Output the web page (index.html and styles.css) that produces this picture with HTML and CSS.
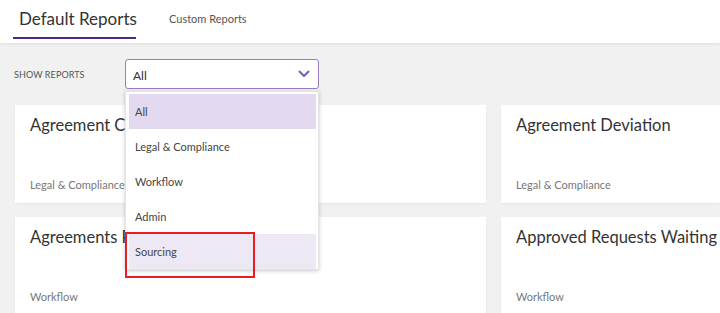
FILE: index.html
```html
<!DOCTYPE html>
<html>
<head>
<meta charset="utf-8">
<link rel="stylesheet" href="styles.css">
</head>
<body>
<header class="header">
  <nav class="tabs">
    <div class="tab tab-active">Default Reports</div>
    <div class="tab">Custom Reports</div>
  </nav>
</header>
<main class="main">
  <div class="filter">
    <span class="filter-label">SHOW REPORTS</span>
    <div class="select-wrap">
      <div class="select">
        <span>All</span>
        <svg class="chevron" width="12" height="8" viewBox="0 0 12 8"><path d="M1.5 1.5 L6 6 L10.5 1.5" fill="none" stroke="#7d5fb0" stroke-width="2" stroke-linecap="round" stroke-linejoin="round"/></svg>
      </div>
      <ul class="menu">
        <li class="item item-selected">All</li>
        <li class="item">Legal &amp; Compliance</li>
        <li class="item">Workflow</li>
        <li class="item">Admin</li>
        <li class="item item-hover">Sourcing</li>
      </ul>
      <div class="highlight-box"></div>
    </div>
  </div>
  <div class="cards">
    <div class="card">
      <div class="card-title card-title-under">Agreement Compliance</div>
      <div class="card-cat">Legal &amp; Compliance</div>
    </div>
    <div class="card">
      <div class="card-title">Agreement Deviation</div>
      <div class="card-cat">Legal &amp; Compliance</div>
    </div>
    <div class="card">
      <div class="card-title card-title-under">Agreements Pending</div>
      <div class="card-cat">Workflow</div>
    </div>
    <div class="card">
      <div class="card-title">Approved Requests Waiting</div>
      <div class="card-cat">Workflow</div>
    </div>
  </div>
</main>
</body>
</html>
```

FILE: styles.css
```css
* { box-sizing: border-box; }
html, body { margin: 0; padding: 0; }
body {
  width: 720px;
  height: 313px;
  overflow: hidden;
  font-family: "Lato", "Liberation Sans", sans-serif;
  background: #f1f1f1;
  color: #333;
}
.header {
  position: relative;
  z-index: 2;
  height: 43px;
  background: #fff;
  box-shadow: 0 1px 3px rgba(0,0,0,0.08);
}
.tabs {
  display: flex;
  align-items: flex-start;
  padding-left: 13px;
  height: 100%;
}
.tab {
  font-size: 11px;
  color: #555;
  padding: 12px 0 0 0;
  margin-left: 33px;
  white-space: nowrap;
}
.tab-active {
  margin-left: 0;
  font-size: 17px;
  color: #333;
  padding: 8px 0 0 6px;
  height: 39px;
  border-bottom: 2px solid #4b2a85;
  width: 123px;
}
.main {
  padding: 16px 0 0 15px;
}
.filter {
  display: flex;
  align-items: center;
  height: 30px;
  position: relative;
  z-index: 3;
}
.filter-label {
  font-size: 9px;
  color: #555;
  width: 111px;
  margin-left: -1px;
  letter-spacing: 0.1px;
}
.select-wrap {
  position: relative;
  width: 194px;
  height: 30px;
}
.select {
  height: 30px;
  border: 1px solid #9a7cc6;
  border-radius: 3px;
  background: #fff;
  display: flex;
  align-items: center;
  justify-content: space-between;
  padding: 2px 8px 0 7px;
  font-size: 12px;
  color: #333;
}
.chevron { margin-top: -2px; }
.menu {
  position: absolute;
  left: 0;
  top: 32px;
  width: 194px;
  height: 179px;
  margin: 0;
  padding: 2px 2px 0 3px;
  list-style: none;
  background: #fff;
  box-shadow: 0 1px 4px rgba(0,0,0,0.22);
  border: 1px solid #e4e4e4;
}
.item {
  height: 35px;
  display: flex;
  align-items: center;
  padding-left: 6px;
  font-size: 11px;
  color: #444;
}
.item-selected { background: #e3daf0; }
.item-hover { background: #ede8f4; }
.highlight-box {
  position: absolute;
  left: 0;
  top: 173px;
  width: 130px;
  height: 46px;
  border: 2px solid #ec1c24;
}
.cards {
  display: grid;
  grid-template-columns: 471px 219px;
  column-gap: 15px;
  row-gap: 14px;
  margin-top: 16px;
}
.card {
  background: #fff;
  height: 98px;
  padding: 10px 0 0 15px;
  display: flex;
  flex-direction: column;
  justify-content: space-between;
  box-shadow: 0 1px 2px rgba(0,0,0,0.05);
}
.card-title {
  font-size: 16.5px;
  color: #333;
  white-space: nowrap;
}
.card-title-under {
  width: 96px;
  overflow: hidden;
}
.card-cat {
  font-size: 11px;
  color: #777;
  padding-bottom: 12px;
}
```
